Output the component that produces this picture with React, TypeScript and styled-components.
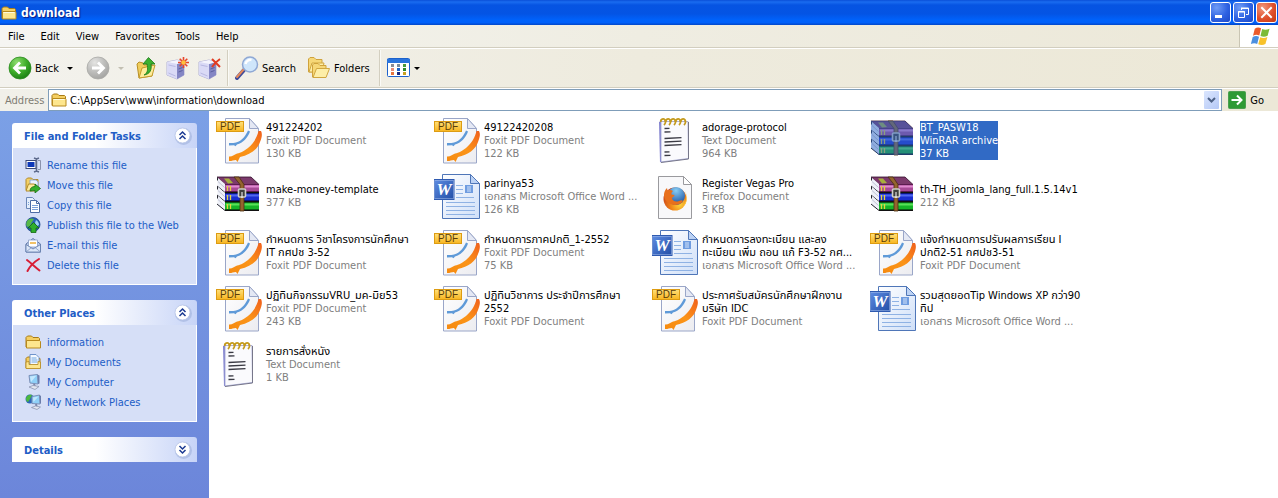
import React from "react";
import styled, { createGlobalStyle } from "styled-components";

const uiFont = `"DejaVu Sans Condensed", "Noto Sans Thai", "Noto Sans", sans-serif`;

const GlobalStyle = createGlobalStyle`
  * { box-sizing: border-box; }
  html, body { margin: 0; height: 100%; }
  #root { min-height: 100%; display: flex; }
  body { font: 11px/13px ${uiFont}; color: #000; background: #fff; }
  button, input { font: inherit; color: inherit; }
  ul { list-style: none; margin: 0; padding: 0; }
  svg { display: block; flex: none; }
`;

const Window = styled.div`
  flex: 1;
  min-width: 0;
  min-height: 100vh;
  display: flex;
  flex-direction: column;
`;

const TitleBar = styled.header`
  height: 25px;
  display: flex;
  align-items: center;
  gap: 4px;
  padding: 0 1px;
  background: linear-gradient(#0a4fd8 0, #1a6cf0 8%, #0654e2 20%, #0454e4 55%, #0062fb 80%, #0060fa 90%, #0347c8 100%);
`;

const Title = styled.h1`
  flex: 1;
  margin: 0;
  font-size: 12px;
  line-height: 16px;
  font-weight: bold;
  color: #fff;
  text-shadow: 1px 1px 1px #0a1883;
`;

const Captions = styled.div`
  display: flex;
  gap: 2px;
`;

const CaptionButton = styled.button<{ $close?: boolean }>`
  width: 21px;
  height: 21px;
  padding: 0;
  border: 1px solid #fff;
  border-radius: 3px;
  background: ${(p) =>
    p.$close
      ? "radial-gradient(circle at 30% 25%, #f0977c, #e0502c 55%, #c23a12)"
      : "radial-gradient(circle at 30% 25%, #6f9cf6, #2e62e2 55%, #1c48c8)"};
`;

const MenuBar = styled.nav`
  height: 23px;
  display: flex;
  align-items: stretch;
  background: linear-gradient(90deg, #f5f5f2, #efede2 50%, #ece8d8);
  border-bottom: 1px solid #d2cebf;
`;

const MenuItem = styled.button`
  border: 0;
  background: none;
  padding: 0 8px;
`;

const Brand = styled.div`
  width: 39px;
  margin-left: auto;
  display: flex;
  justify-content: center;
  align-items: center;
  background: #fff;
  border-left: 1px solid #c9c5b4;
`;

const ToolBar = styled.div`
  height: 40px;
  display: flex;
  align-items: center;
  padding-left: 8px;
  background: linear-gradient(90deg, #f3f2ed, #eeebde 50%, #ece8d7);
  border-top: 1px solid #fff;
  border-bottom: 1px solid #d2cebf;
`;

const ToolButton = styled.button<{ $width: number }>`
  width: ${(p) => p.$width}px;
  height: 32px;
  padding: 0;
  border: 0;
  background: none;
  display: flex;
  align-items: center;
  gap: 3px;
  white-space: nowrap;
`;

const Caret = styled.span<{ $dim?: boolean; $push?: boolean }>`
  border: 3px solid transparent;
  border-top-color: ${(p) => (p.$dim ? "#c2bfb2" : "#000")};
  border-bottom: 0;
  margin-left: ${(p) => (p.$push ? 5 : 0)}px;
`;

const Divider = styled.span`
  width: 2px;
  height: 36px;
  margin-right: 6px;
  background: #d3cfc0;
  border-right: 1px solid #fafaf6;
`;

const AddressBar = styled.form`
  height: 23px;
  display: flex;
  align-items: center;
  padding: 0 14px 0 5px;
  background: linear-gradient(90deg, #f1f0e9, #eeebde 50%, #ece8d7);
  border-top: 1px solid #fff;
`;

const AddressLabel = styled.label`
  width: 43px;
  color: #7f7c73;
`;

const AddressBox = styled.div`
  flex: 1;
  height: 22px;
  display: flex;
  align-items: center;
  padding: 0 2px;
  gap: 3px;
  background: #fff;
  border: 1px solid #7f9db9;
`;

const AddressInput = styled.input`
  flex: 1;
  min-width: 0;
  padding: 0;
  border: 0;
  outline: 0;
  background: none;
`;

const DropButton = styled.button`
  width: 15px;
  height: 18px;
  padding: 0;
  display: flex;
  align-items: center;
  justify-content: center;
  border: 0;
  border-radius: 1px;
  background: linear-gradient(135deg, #dbe6fe, #b4c8f6);
`;

const GoButton = styled.button`
  margin-left: 6px;
  padding: 0;
  border: 0;
  background: none;
  display: flex;
  align-items: center;
  gap: 4px;
`;

const Body = styled.div`
  flex: 1;
  display: flex;
`;

const Sidebar = styled.aside`
  width: 209px;
  flex: none;
  padding: 12px;
  display: flex;
  flex-direction: column;
  gap: 15px;
  background: linear-gradient(#7ba0e6, #6c86da);
`;

const Panel = styled.section``;

const PanelHeader = styled.div`
  height: 25px;
  display: flex;
  align-items: center;
  justify-content: space-between;
  padding: 0 4px 0 12px;
  border-radius: 3px 3px 0 0;
  background: linear-gradient(90deg, #fff 45%, #c7d4f7);
`;

const PanelTitle = styled.h2`
  margin: 2px 0 0;
  font-size: 11px;
  line-height: 13px;
  color: #215dc6;
`;

const Toggle = styled.button`
  width: 20px;
  height: 20px;
  padding: 0;
  border: 0;
  background: none;
`;

const PanelList = styled.ul`
  padding: 7px 12px 9px;
  background: #d6dff7;
  border: 1px solid #fff;
  border-top: 0;
`;

const PlaceLink = styled.a`
  height: 20px;
  display: flex;
  align-items: center;
  gap: 5px;
  color: #215dc6;
  text-decoration: none;
  white-space: nowrap;
`;

const Files = styled.main`
  flex: 1;
  min-width: 0;
  padding: 1px 0 0 7px;
`;

const FileGrid = styled.ul`
  display: grid;
  grid-template-columns: repeat(4, 218px);
  grid-auto-rows: 56px;
`;

const FileItem = styled.button`
  width: 100%;
  height: 56px;
  padding: 0;
  border: 0;
  background: none;
  display: flex;
  align-items: center;
  gap: 2px;
  text-align: left;
  white-space: nowrap;
`;

const FileText = styled.span<{ $selected?: boolean }>`
  display: flex;
  flex-direction: column;
  color: ${(p) => (p.$selected ? "#fff" : "#000")};
  background: ${(p) => (p.$selected ? "#316ac5" : "none")};
`;

const Detail = styled.span<{ $selected?: boolean }>`
  color: ${(p) => (p.$selected ? "#fff" : "#808080")};
`;

/* ---------- small icons ---------- */

const FolderIcon = () => (
  <svg width="16" height="16" viewBox="0 0 16 16">
    <path d="M1 13.500V3.500L2.500 2h4L8 3.500h5.500l1 1V7" fill="#f5cf62" stroke="#a87b16" />
    <path d="M1.500 14V6.500h12.500l1 1V14z" fill="#fde68e" stroke="#b88a1e" />
    <path d="M2.500 7.500h11" stroke="#fffbe0" />
  </svg>
);

const MinIcon = () => (
  <svg width="19" height="19" viewBox="0 0 19 19">
    <path d="M4 12h7v3H4z" fill="#fff" />
  </svg>
);

const RestoreIcon = () => (
  <svg width="19" height="19" viewBox="0 0 19 19" fill="none" stroke="#fff">
    <path d="M7 5h7.500v6.500H12M7 5.500h7.500M7.500 5v2" />
    <path d="M4.500 8.500h6v6h-6zM4 9h7" />
  </svg>
);

const CloseIcon = () => (
  <svg width="19" height="19" viewBox="0 0 19 19">
    <path d="M5 5l9 9M14 5l-9 9" stroke="#fff" strokeWidth="2" strokeLinecap="square" />
  </svg>
);

const FlagIcon = () => (
  <svg width="24" height="20" viewBox="-2 0 22 19">
    <path d="M5 2.500c2-1.300 4-1.400 6-.3L9.300 9c-2-1-4-.9-6 .2z" fill="#ea5a2b" />
    <path d="M12 2.800c2.200 1.100 4.300 1 7-.3L17.200 9.300c-2.300 1.200-4.500 1.200-6.800.2z" fill="#7cbb35" />
    <path d="M3 10.400c2-1.200 4-1.300 6-.3L7.300 17c-2-1-4-.9-6 .2z" fill="#4a8fe0" />
    <path d="M10.100 10.700c2.200 1.100 4.400 1 6.900-.3L15.100 17.200c-2.200 1.200-4.500 1.200-6.800.2z" fill="#f8c22a" />
  </svg>
);

const RoundArrow = ({ dim }: { dim?: boolean }) => (
  <svg width="24" height="24" viewBox="0 0 24 24">
    <defs>
      <radialGradient id={dim ? "fwd" : "back"} cx=".35" cy=".25" r=".8">
        <stop offset="0" stopColor={dim ? "#e4e4e2" : "#8fdc70"} />
        <stop offset=".55" stopColor={dim ? "#bdbdbb" : "#3fae2a"} />
        <stop offset="1" stopColor={dim ? "#a3a3a1" : "#1b7d14"} />
      </radialGradient>
    </defs>
    <circle cx="12" cy="12" r="11" fill={`url(#${dim ? "fwd" : "back"})`} stroke={dim ? "#a9a9a6" : "#2b8a1e"} strokeWidth=".8" />
    <path
      d={dim ? "M6 12h11M12 6.500l5.500 5.500-5.500 5.500" : "M18 12H7M12 6.500L6.500 12l5.500 5.500"}
      fill="none"
      stroke="#fff"
      strokeWidth="2.800"
    />
  </svg>
);

const UpIcon = () => (
  <svg width="20" height="24" viewBox="0 0 20 24">
    <path d="M1 8l2-2 4 1 1 2 8-1v12L3 22z" fill="#f0cd5c" stroke="#b88f26" />
    <path d="M3 22l3-10 13-3-3 11z" fill="#fdec9a" stroke="#c39a2c" />
    <path d="M8 19c4-2 4-6 3-11H7l5.500-6.500L19 8h-4c1 6-1 10-7 11z" fill="#3bb030" stroke="#1b7a18" strokeWidth=".8" />
  </svg>
);

const ServerIcon = ({ star }: { star?: boolean }) => (
  <svg width="24" height="24" viewBox="0 0 24 24">
    <path d="M1 6l10-2 7 2v13l-7 4-10-4z" fill="#cdcdf0" stroke="#a2a2cc" strokeWidth=".8" />
    <path d="M11 8l7-2v13l-7 4z" fill="#8486c4" />
    <path d="M1 6l10 2v15L1 19z" fill="#dadaf6" />
    <path d="M1 6l10-2 7 2-7 2z" fill="#f4f4fd" />
    <path d="M12.500 13l4-1.500M12.500 16l4-1.500" stroke="#5b5e9e" />
    <path d="M2.500 17l7 3M2.500 9l7 1.500" stroke="#b8b8e2" />
    {star ? (
      <>
        <path d="M17.500 1v11M12 6.500h11M13.700 2.700l7.600 7.600M21.300 2.700l-7.600 7.600" stroke="#e8452a" strokeWidth="1.600" />
        <circle cx="17.500" cy="6.500" r="2.200" fill="#fdc13c" />
      </>
    ) : (
      <path d="M14 3l8 8M22 3c-3 2-6 5-8 8" stroke="#e23c22" strokeWidth="2" fill="none" />
    )}
  </svg>
);

const SearchIcon = () => (
  <svg width="24" height="24" viewBox="0 0 24 24">
    <path d="M2 22l7-8" stroke="#3f4a9a" strokeWidth="4" strokeLinecap="round" />
    <path d="M2 21l7-8" stroke="#e88a58" strokeWidth="2" strokeLinecap="round" />
    <circle cx="15" cy="8.500" r="7.500" fill="#cfe6fb" stroke="#8fa8d4" strokeWidth="1.500" />
    <path d="M10.500 8a5 5 0 0 1 6-4" stroke="#fff" strokeWidth="2.500" fill="none" />
  </svg>
);

const FoldersIcon = () => (
  <svg width="24" height="24" viewBox="0 0 24 24">
    <path d="M1.500 16V3l1.500-1.500h4L9 3.500h6V16z" fill="#f6d777" stroke="#cfa23c" />
    <path d="M2 16l3-9h12l-2 9z" fill="#fdeea8" stroke="#d0a640" />
    <path d="M5.500 21V9L7 7.500h4l2 2h6V21z" fill="#f6d777" stroke="#cfa23c" />
    <path d="M6 21.500l3.500-9h13l-3.500 9z" fill="#fdeea8" stroke="#d0a640" />
  </svg>
);

const ViewsIcon = () => (
  <svg width="24" height="20" viewBox="0 0 24 20">
    <rect x=".5" y=".5" width="22" height="18" rx="1" fill="#fff" stroke="#1c62cc" />
    <path d="M0 1h23v4H0z" fill="#2a74dc" />
    {[
      ["#8b8b95", "#7a8a9a", "#4b9a3b"],
      ["#e88a76", "#1a62c8", "#2b8a2b"],
      ["#e8743c", "#1a2a80", "#c8a020"],
    ].map((row, r) => row.map((c, i) => <rect key={`${r}${i}`} x={4 + i * 6} y={6 + r * 4} width="3" height="3" fill={c} />))}
  </svg>
);

const GoIcon = () => (
  <svg width="18" height="18" viewBox="0 0 18 18">
    <rect x=".5" y=".5" width="17" height="17" rx="1" fill="#2f9a35" stroke="#4c9f50" />
    <path d="M3.500 9h10M9 4.500L13.500 9 9 13.500" stroke="#fff" strokeWidth="2" fill="none" />
  </svg>
);

const ChevronIcon = () => (
  <svg width="9" height="6" viewBox="0 0 9 6">
    <path d="M1 1l3.500 3.500L8 1" fill="none" stroke="#4d6185" strokeWidth="2" />
  </svg>
);

const ToggleIcon = ({ down }: { down?: boolean }) => (
  <svg width="20" height="20" viewBox="0 0 20 20">
    <circle cx="10.500" cy="10.500" r="8.500" fill="#9fb0dc" opacity=".6" />
    <circle cx="9.500" cy="9.500" r="7.500" fill="#fff" stroke="#b4c1e4" strokeWidth=".8" />
    <path
      d={down ? "M6.500 6l3 3 3-3M6.500 10l3 3 3-3" : "M6.500 9l3-3 3 3M6.500 13l3-3 3 3"}
      fill="none"
      stroke="#1b3a92"
      strokeWidth="1.500"
    />
  </svg>
);

const RenameIcon = () => (
  <svg width="17" height="16" viewBox="0 0 17 16">
    <rect x="1" y="3.500" width="10" height="8" fill="#fff" stroke="#3c4a78" />
    <rect x="2.500" y="5" width="7" height="5" fill="#0d38b8" />
    <path d="M9 1l2.500 1L14 1M11.500 2v12M9 15l2.500-1L14 15" stroke="#5d6a8c" strokeWidth="1.500" fill="none" />
    <path d="M13 3.500h2.500v9H13" fill="none" stroke="#8b93ad" />
  </svg>
);

const MoveIcon = () => (
  <svg width="17" height="16" viewBox="0 0 17 16">
    <path d="M1 13V2.500L2.500 1h4L8 2.500h5V13z" fill="#f3d067" stroke="#b28a28" />
    <path d="M5 3h6l2 2v7H5z" fill="#eaf3ff" stroke="#7d9fd0" strokeWidth=".8" />
    <path d="M1 14l2.500-7H9l2 1v6z" fill="#fdea9c" stroke="#b28a28" />
    <path d="M5 14c0-3 2-4.500 5-4.500V7l5.500 4.500L10 16v-2.500c-2 0-3 .5-5 .5z" fill="#35b02c" stroke="#186e14" strokeWidth=".8" />
  </svg>
);

const CopyIcon = () => (
  <svg width="17" height="16" viewBox="0 0 17 16">
    <path d="M1.500.5h6l2 2v9h-8z" fill="#e4eefc" stroke="#6a87b8" />
    <path d="M5.500 3.500h6l3 3v9h-9z" fill="#fff" stroke="#4d6ca4" />
    <path d="M11.500 3.500v3h3" fill="none" stroke="#4d6ca4" />
    <path d="M7 8.500h6M7 10.500h6M7 12.500h6M3 5.500h1M3 7.500h1" stroke="#7ba0d8" />
  </svg>
);

const PublishIcon = () => (
  <svg width="17" height="16" viewBox="0 0 17 16">
    <circle cx="8" cy="7.500" r="7" fill="#2a62b8" stroke="#1c4586" strokeWidth=".8" />
    <path d="M2 4c2-3 5-3 7-2L7 5 5 9 2 10C1 8 1 6 2 4z" fill="#57b848" />
    <path d="M11 3c2 1 3 3 3 5l-2 1-2-3z" fill="#9bd0f4" />
    <path d="M8.500 5.500L14 11h-3v4.500H6V11H3z" fill="#2fae2c" stroke="#12690f" strokeWidth=".8" />
  </svg>
);

const MailIcon = () => (
  <svg width="17" height="16" viewBox="0 0 17 16">
    <path d="M1 7l7-5.500L15.500 7v8H1z" fill="#b9c9ea" stroke="#5f78a8" />
    <path d="M3.500 3h9v7h-9z" fill="#fff" stroke="#8aa0c8" strokeWidth=".8" />
    <path d="M5 5h6v2H5z" fill="#f2c268" />
    <path d="M1 7.500l7 4.500 7.500-4.500V15H1z" fill="#dbe6f8" stroke="#5f78a8" strokeWidth=".8" />
    <path d="M1 15l5.500-4.500M15.500 15L10 10.500" stroke="#7f96c0" strokeWidth=".8" />
  </svg>
);

const DeleteIcon = () => (
  <svg width="17" height="16" viewBox="0 0 17 16">
    <path d="M2 3c4 3 8 7 12.500 10.500M14 2C9 5 5 9 2.500 14" fill="none" stroke="#d81e36" strokeWidth="2" strokeLinecap="round" />
  </svg>
);

const SmallFolder = () => (
  <svg width="17" height="16" viewBox="0 0 17 16">
    <path d="M1 13V3.500L2.500 2h4L8 3.500h5.500l1 1V7" fill="#f5cf62" stroke="#a87b16" />
    <path d="M1.500 14V6.500h13l1 1V14z" fill="#fde68e" stroke="#b88a1e" />
  </svg>
);

const DocumentsIcon = () => (
  <svg width="17" height="16" viewBox="0 0 17 16">
    <path d="M1 14V4.500L2.500 3H6l1 1.500h8V14z" fill="#f3cb5b" stroke="#a87b16" />
    <path d="M5 .5h6l3 3V11H5z" fill="#f4f9ff" stroke="#6f94cc" />
    <path d="M6.500 4h5M6.500 6h6M6.500 8h6" stroke="#6fa6e0" />
    <path d="M1 14.500V8l3-.5v3h9v-3l2.500.5v6.500z" fill="#fde68e" stroke="#b88a1e" strokeWidth=".8" />
  </svg>
);

const ComputerIcon = () => (
  <svg width="17" height="16" viewBox="0 0 17 16">
    <path d="M4 1.500L12.500.5l.5 9.500-8-1z" fill="#8fd0f8" stroke="#7c90b8" />
    <path d="M5 2.500l6.500-1L6 8z" fill="#c4e8fd" />
    <path d="M12.500.5l2 1v8L13 10z" fill="#6b7dab" />
    <path d="M9 10l1 3" stroke="#7c88a8" strokeWidth="2" />
    <path d="M4 13l4-1.500 6 1-4 3z" fill="#e2e6f0" stroke="#8c96b2" strokeWidth=".8" />
  </svg>
);

const NetworkIcon = () => (
  <svg width="17" height="16" viewBox="0 0 17 16">
    <circle cx="5" cy="5" r="4.500" fill="#2c66b8" />
    <path d="M1 4c1-3 4-4 6-3L5 5 3 8C1 7 1 6 1 4z" fill="#4cb83e" />
    <path d="M7 2.500L14.500 1l.5 9-8-.5z" fill="#8fd0f8" stroke="#7c90b8" />
    <path d="M8 3.500l5.500-1L8.500 8z" fill="#c4e8fd" />
    <path d="M14.500 1l1.500 1v7l-1 1z" fill="#6b7dab" />
    <path d="M11 10l.5 2.500" stroke="#7c88a8" strokeWidth="2" />
    <path d="M6.500 13.500l4-1.500 5 1-3.500 2.500z" fill="#e2e6f0" stroke="#8c96b2" strokeWidth=".8" />
  </svg>
);

/* ---------- file type icons ---------- */

const PdfIcon = () => (
  <svg width="48" height="48" viewBox="0 0 48 48">
    <defs>
      <linearGradient id="pdfPage" x2="1" y2="1">
        <stop offset="0" stopColor="#fff" />
        <stop offset="1" stopColor="#ececf0" />
      </linearGradient>
      <linearGradient id="pdfOrange" x1="1" y1="0" x2="0" y2="1">
        <stop offset="0" stopColor="#f0601c" />
        <stop offset=".5" stopColor="#fb9418" />
        <stop offset="1" stopColor="#f58a10" />
      </linearGradient>
      <linearGradient id="pdfTag" x2="0" y2="1">
        <stop offset="0" stopColor="#ffe07a" />
        <stop offset="1" stopColor="#f8b520" />
      </linearGradient>
    </defs>
    <path d="M9.500 2.500h24l9 10v34.500h-33z" fill="url(#pdfPage)" stroke="#9aa6c8" />
    <path d="M33.500 2.500v10h9z" fill="#e4e8f4" stroke="#9aa6c8" strokeLinejoin="round" />
    <path d="M32 14.500C30 19 26 25 20 26.500c-1 .5-4 .5-7 .5v2.500l5-.3 1.500 1L21 28.500c6-1.500 11-7 13-13z" fill="#5f9ad8" />
    <path d="M42.500 15C41 21 38 27 32 32c-5 4-9 5-12 6-2 .8-4 3-7 2.500v4.500c2 .5 4-.8 7-1l1.500 2 2.500-5c10-2 18-8 20-15 2-5 2.500-8 1-11z" fill="url(#pdfOrange)" />
    <rect x=".5" y="5.500" width="27" height="10" fill="url(#pdfTag)" stroke="#dd9c12" />
    <text x="14" y="14" textAnchor="middle" fontFamily="Liberation Sans, sans-serif" fontSize="10" fill="#5a3c08">PDF</text>
  </svg>
);

const WordIcon = () => (
  <svg width="48" height="48" viewBox="0 0 48 48">
    <defs>
      <linearGradient id="wordPage" x2="1" y2="1">
        <stop offset="0" stopColor="#fff" />
        <stop offset="1" stopColor="#cfdff8" />
      </linearGradient>
      <linearGradient id="wordBox" x2="1" y2="1">
        <stop offset="0" stopColor="#5c8ae0" />
        <stop offset="1" stopColor="#2450a8" />
      </linearGradient>
    </defs>
    <path d="M8.500 2.500h28l9 9v35h-37z" fill="url(#wordPage)" stroke="#4f76b8" />
    <path d="M36.500 2.500v9h9z" fill="#bcd2f4" stroke="#4f76b8" strokeLinejoin="round" />
    <path d="M22 13.500h7M22 17.500h7M22 21.500h7M22 25.500h18M12 30.500h29M12 34.500h29M12 38.500h29M12 42.500h29" stroke="#8fb2e4" />
    <rect x="31" y="13" width="8" height="8" fill="#6f9ce0" />
    <path d="M33 15h4M33 17h4M33 19h4" stroke="#d4e3fa" />
    <rect x="0" y="7.500" width="20" height="20" fill="#a9c2ee" stroke="#2f5ab0" />
    <rect x="1" y="8.500" width="18" height="18" fill="url(#wordBox)" />
    <text x="10" y="23" textAnchor="middle" fontFamily="Liberation Serif, serif" fontStyle="italic" fontWeight="bold" fontSize="17" fill="#fff">W</text>
  </svg>
);

const NoteIcon = () => (
  <svg width="48" height="48" viewBox="0 0 48 48">
    <path d="M7 6l2-1 1 40-2 1.500z" fill="#8484d0" />
    <path d="M9 5.500h27l.5 37L9 46z" fill="#fafafd" stroke="#9a9ed0" strokeWidth=".8" />
    <path d="M36.500 6v37L9 46.500" fill="none" stroke="#77778a" />
    {[10, 15, 20, 25, 30].map((x) => (
      <path key={x} d={`M${x - 1} 6c-1-3 3-4 4-2s0 4-1 5`} fill="none" stroke="#c49a1c" strokeWidth="1.800" />
    ))}
    <path
      d="M12.500 12.500l5-.2M12.500 16l6-.2M12.500 22.500l17-.8M12.500 26l17-.8M12.500 29.500l17-.8M12.500 36l5-.2M12.500 39.500l6-.2"
      stroke="#3a3a44"
      strokeWidth="1.300"
    />
  </svg>
);

const FirefoxIcon = () => (
  <svg width="48" height="48" viewBox="0 0 48 48">
    <defs>
      <radialGradient id="ffFox" cx=".7" cy=".75" r=".8">
        <stop offset="0" stopColor="#fcd23a" />
        <stop offset=".45" stopColor="#f28a1a" />
        <stop offset="1" stopColor="#c8401a" />
      </radialGradient>
      <radialGradient id="ffGlobe" cx=".5" cy=".2" r=".8">
        <stop offset="0" stopColor="#86ccf4" />
        <stop offset="1" stopColor="#1b4f9e" />
      </radialGradient>
    </defs>
    <path d="M6.500 4.500h25l8 8v34h-33z" fill="#f8f8fa" stroke="#9a9a9e" />
    <path d="M31.500 4.500v8h8z" fill="#fff" stroke="#9a9a9e" strokeLinejoin="round" />
    <circle cx="23" cy="27" r="11.500" fill="url(#ffFox)" />
    <circle cx="24" cy="24" r="9" fill="url(#ffGlobe)" />
    <path d="M12 23c0-3 1-5 3-7l.5 2.500c2-.8 4-.5 5.500.5-1 1-2 2-1.500 3.500l3 .5c0 1.500-2 2-2.500 3 0 3 4 4.500 7 3 2-1 3-1 4 0-2 3.500-8 5.500-12.500 3C14 30 12 27 12 23z" fill="#e8701c" />
    <path d="M33 19c2 5 2 10-1.500 14.500C35 33 36 24 33 19z" fill="#fbc634" />
  </svg>
);

const books = [
  { y: 12, light: "#e08ad0", main: "#a84a96", dark: "#5c1c50" },
  { y: 21, light: "#5068f0", main: "#1a2ed0", dark: "#0b1678" },
  { y: 30, light: "#58e058", main: "#16b428", dark: "#0a5c14" },
];

const RarIcon = ({ selected }: { selected?: boolean }) => (
  <svg width="48" height="48" viewBox="0 0 48 48">
    <path d="M1 5h34l8 7.500H9z" fill="#7c3a6c" stroke="#33102c" strokeWidth=".8" />
    <path d="M8 6.500h5l4 4.500-5 .5z" fill="#a8b03c" />
    {books.map((b) => (
      <g key={b.y}>
        <path d={`M1.500 ${b.y - 6.5}L9 ${b.y}v8.500l-7.500-5z`} fill="#eef0f8" />
        <path d={`M1.500 ${b.y - 6.5}v3M1 ${b.y + 2}l8 6.500`} stroke="#26262e" />
        <path d={`M2 ${b.y - 2.5}l6.500 6`} stroke="#b4b8c8" strokeWidth=".8" />
        <path d={`M9 ${b.y}h34v8.500H9z`} fill={b.main} />
        <path d={`M9 ${b.y + 0.500}h34`} stroke={b.dark} />
        <path d={`M10 ${b.y + 2.5}h33`} stroke={b.light} strokeWidth="2" />
        <path d={`M9 ${b.y + 7.500}h34`} stroke={b.dark} />
        <path d={`M9 ${b.y + 8.500}h34`} stroke="#111" />
        <path d={`M11.500 ${b.y + 2}v5M14.500 ${b.y + 2}v5`} stroke="#e4d23c" strokeWidth="1.300" />
      </g>
    ))}
    <path d="M18 5h5l5 7.500V39h-4V12.500z" fill="#94642e" stroke="#4a2e10" strokeWidth=".8" />
    <rect x="22.500" y="17" width="7" height="8" rx="1" fill="#3f3f3c" stroke="#d0d0c8" strokeWidth="1.600" />
    <path d="M26 20v6" stroke="#fff" />
    {selected && <path d="M1 5h34l8 7.500V39H9l-8-7z" fill="#316ac5" opacity=".5" />}
  </svg>
);

/* ---------- data ---------- */

const tasks = [
  { icon: <RenameIcon />, label: "Rename this file" },
  { icon: <MoveIcon />, label: "Move this file" },
  { icon: <CopyIcon />, label: "Copy this file" },
  { icon: <PublishIcon />, label: "Publish this file to the Web" },
  { icon: <MailIcon />, label: "E-mail this file" },
  { icon: <DeleteIcon />, label: "Delete this file" },
];

const places = [
  { icon: <SmallFolder />, label: "information" },
  { icon: <DocumentsIcon />, label: "My Documents" },
  { icon: <ComputerIcon />, label: "My Computer" },
  { icon: <NetworkIcon />, label: "My Network Places" },
];

type Kind = "pdf" | "doc" | "txt" | "rar" | "html";
type FileEntry = { kind: Kind; name: string[]; details: string[]; selected?: boolean };

const PDF = "Foxit PDF Document";
const DOC = "เอกสาร Microsoft Office Word ...";

const files: FileEntry[] = [
  { kind: "pdf", name: ["491224202"], details: [PDF, "130 KB"] },
  { kind: "pdf", name: ["49122420208"], details: [PDF, "122 KB"] },
  { kind: "txt", name: ["adorage-protocol"], details: ["Text Document", "964 KB"] },
  { kind: "rar", name: ["BT_PASW18"], details: ["WinRAR archive", "37 KB"], selected: true },
  { kind: "rar", name: ["make-money-template"], details: ["377 KB"] },
  { kind: "doc", name: ["parinya53"], details: [DOC, "126 KB"] },
  { kind: "html", name: ["Register Vegas Pro"], details: ["Firefox Document", "3 KB"] },
  { kind: "rar", name: ["th-TH_joomla_lang_full.1.5.14v1"], details: ["212 KB"] },
  { kind: "pdf", name: ["กำหนดการ วิชาโครงการนักศึกษา", "IT กศปช 3-52"], details: [PDF] },
  { kind: "pdf", name: ["กำหนดการภาคปกติ_1-2552"], details: [PDF, "75 KB"] },
  { kind: "doc", name: ["กำหนดการลงทะเบียน และลง", "ทะเบียน เพิ่ม ถอน แก้ F3-52 กศ..."], details: [DOC] },
  { kind: "pdf", name: ["แจ้งกำหนดการปรับผลการเรียน I", "ปกติ2-51 กศปช3-51"], details: [PDF] },
  { kind: "pdf", name: ["ปฏิทินกิจกรรมVRU_มค-มิย53"], details: [PDF, "243 KB"] },
  { kind: "pdf", name: ["ปฏิทินวิชาการ ประจำปีการศึกษา", "2552"], details: [PDF] },
  { kind: "pdf", name: ["ประกาศรับสมัครนักศึกษาฝึกงาน", "บริษัท IDC"], details: [PDF] },
  { kind: "doc", name: ["รวมสุดยอดTip Windows XP กว่า90", "ทิป"], details: [DOC] },
  { kind: "txt", name: ["รายการสั่งหนัง"], details: ["Text Document", "1 KB"] },
];

const FileIcon = ({ kind, selected }: { kind: Kind; selected?: boolean }) => {
  if (kind === "pdf") return <PdfIcon />;
  if (kind === "doc") return <WordIcon />;
  if (kind === "txt") return <NoteIcon />;
  if (kind === "html") return <FirefoxIcon />;
  return <RarIcon selected={selected} />;
};

type PanelProps = { title: string; collapsed?: boolean; items?: { icon: React.ReactNode; label: string }[] };

const SidePanel = ({ title, collapsed, items }: PanelProps) => (
  <Panel>
    <PanelHeader>
      <PanelTitle>{title}</PanelTitle>
      <Toggle type="button" aria-label={`Toggle ${title}`} aria-expanded={!collapsed}>
        <ToggleIcon down={collapsed} />
      </Toggle>
    </PanelHeader>
    {items && (
      <PanelList>
        {items.map((it) => (
          <li key={it.label}>
            <PlaceLink href="#">
              {it.icon}
              {it.label}
            </PlaceLink>
          </li>
        ))}
      </PanelList>
    )}
  </Panel>
);

export default function App() {
  return (
    <>
      <GlobalStyle />
      <Window>
        <TitleBar>
          <FolderIcon />
          <Title>download</Title>
          <Captions>
            <CaptionButton type="button" aria-label="Minimize"><MinIcon /></CaptionButton>
            <CaptionButton type="button" aria-label="Restore"><RestoreIcon /></CaptionButton>
            <CaptionButton type="button" aria-label="Close" $close><CloseIcon /></CaptionButton>
          </Captions>
        </TitleBar>
        <MenuBar>
          {["File", "Edit", "View", "Favorites", "Tools", "Help"].map((m) => (
            <MenuItem key={m} type="button">{m}</MenuItem>
          ))}
          <Brand><FlagIcon /></Brand>
        </MenuBar>
        <ToolBar>
          <ToolButton type="button" $width={78}><RoundArrow />Back<Caret $push /></ToolButton>
          <ToolButton type="button" $width={50} aria-label="Forward"><RoundArrow dim /><Caret $dim $push /></ToolButton>
          <ToolButton type="button" $width={30} aria-label="Up"><UpIcon /></ToolButton>
          <ToolButton type="button" $width={32} aria-label="Map drive"><ServerIcon star /></ToolButton>
          <ToolButton type="button" $width={29} aria-label="Disconnect drive"><ServerIcon /></ToolButton>
          <Divider />
          <ToolButton type="button" $width={72}><SearchIcon />Search</ToolButton>
          <ToolButton type="button" $width={72}><FoldersIcon />Folders</ToolButton>
          <Divider />
          <ToolButton type="button" $width={36} aria-label="Views"><ViewsIcon /><Caret /></ToolButton>
        </ToolBar>
        <AddressBar onSubmit={(e) => e.preventDefault()}>
          <AddressLabel htmlFor="address">Address</AddressLabel>
          <AddressBox>
            <FolderIcon />
            <AddressInput id="address" defaultValue="C:\AppServ\www\information\download" />
            <DropButton type="button" aria-label="Show addresses"><ChevronIcon /></DropButton>
          </AddressBox>
          <GoButton type="submit"><GoIcon />Go</GoButton>
        </AddressBar>
        <Body>
          <Sidebar>
            <SidePanel title="File and Folder Tasks" items={tasks} />
            <SidePanel title="Other Places" items={places} />
            <SidePanel title="Details" collapsed />
          </Sidebar>
          <Files>
            <FileGrid>
              {files.map((f) => (
                <li key={f.name[0]}>
                  <FileItem type="button" aria-pressed={!!f.selected}>
                    <FileIcon kind={f.kind} selected={f.selected} />
                    <FileText $selected={f.selected}>
                      {f.name.map((n) => <span key={n}>{n}</span>)}
                      {f.details.map((d) => <Detail key={d} $selected={f.selected}>{d}</Detail>)}
                    </FileText>
                  </FileItem>
                </li>
              ))}
            </FileGrid>
          </Files>
        </Body>
      </Window>
    </>
  );
}
